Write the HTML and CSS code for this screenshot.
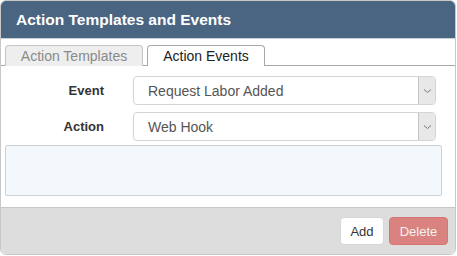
FILE: index.html
```html
<!DOCTYPE html>
<html lang="en">
<head>
    <meta charset="UTF-8">
    <title>Action Templates and Events</title>
    <link rel="stylesheet" href="styles.css">
</head>
<body>
    <div class="dialog">
        <div class="dialog-header">Action Templates and Events</div>

        <div class="dialog-body">
            <div class="tabs">
                <span class="tab">Action Templates</span>
                <span class="tab active">Action Events</span>
            </div>

            <div class="form-rows">
                <div class="form-row">
                    <label class="form-label">Event</label>
                    <div class="select-box">
                        <span class="select-text">Request Labor Added</span>
                        <span class="select-arrow">
                            <svg width="9" height="6" viewBox="0 0 9 6"><path d="M1 1.5 L4.5 4.5 L8 1.5" fill="none" stroke="#777" stroke-width="1"/></svg>
                        </span>
                    </div>
                </div>
                <div class="form-row">
                    <label class="form-label">Action</label>
                    <div class="select-box">
                        <span class="select-text">Web Hook</span>
                        <span class="select-arrow">
                            <svg width="9" height="6" viewBox="0 0 9 6"><path d="M1 1.5 L4.5 4.5 L8 1.5" fill="none" stroke="#777" stroke-width="1"/></svg>
                        </span>
                    </div>
                </div>
            </div>

            <div class="detail-box"></div>
        </div>

        <div class="dialog-footer">
            <button class="btn btn-add">Add</button>
            <button class="btn btn-delete" disabled>Delete</button>
        </div>
    </div>
</body>
</html>
```

FILE: styles.css
```css
body { margin: 0; font-family: "Liberation Sans", Arial, sans-serif; background: #fff; }
.dialog { width: 454px; height: 253px; border: 1px solid #c8c8c8; border-radius: 6px; overflow: hidden; display: flex; flex-direction: column; background: #fff; }
.dialog-header { flex: none; height: 37px; padding: 0 15px; display: flex; align-items: center; background: #4a6582; color: #fff; font-size: 15.5px; font-weight: bold; border-bottom: 1px solid #c8d0d8; }
.dialog-body { flex: 1; padding: 6px 0 0 0; }
.tabs { display: flex; gap: 4px; padding-left: 4px; border-bottom: 1px solid #a9a9a9; height: 20px; }
.tab { box-sizing: border-box; height: 21px; padding: 0; white-space: nowrap; text-align: center; font-size: 14px; line-height: 20px; border: 1px solid #c4c4c4; border-bottom: none; border-radius: 4px 4px 0 0; background: #eeeeee; color: #8a8a8a; }
.tab:first-child { width: 138px; }
.tab.active { width: 118px; background: #fff; color: #222; border-color: #a9a9a9; }
.form-rows { display: flex; flex-direction: column; gap: 7px; padding: 10px 0 0 0; }
.form-row { display: flex; align-items: center; height: 29px; }
.form-label { width: 103px; text-align: right; font-size: 13px; font-weight: bold; color: #333; }
.select-box { margin-left: 29px; width: 303px; height: 29px; box-sizing: border-box; display: flex; align-items: center; border: 1px solid #d4d4d4; border-radius: 4px; overflow: hidden; }
.select-text { flex: 1; padding-left: 14px; font-size: 14px; color: #555; }
.select-arrow { width: 16px; height: 100%; display: flex; align-items: center; justify-content: center; background: #e8e8e8; border-left: 1px solid #c4c4c4; }
.detail-box { margin: 4px 0 0 4px; width: 437px; height: 51px; box-sizing: border-box; background: #f3f8fd; border: 1px solid #d0d0d0; border-radius: 2px; }
.dialog-footer { flex: none; height: 46px; display: flex; align-items: center; justify-content: flex-end; gap: 5px; padding-right: 7px; background: #dddddd; border-top: 1px solid #c8c8c8; }
.btn { height: 28px; box-sizing: border-box; font-family: "Liberation Sans", Arial, sans-serif; font-size: 13px; border-radius: 4px; border: 1px solid #d6d6d6; padding: 0 12px; }
.btn-add { width: 44px; padding: 0; background: #fff; color: #333; }
.btn-delete { width: 59px; padding: 0; background: #d9534f; border-color: #d43f3a; color: #fff; opacity: 0.65; }
```
